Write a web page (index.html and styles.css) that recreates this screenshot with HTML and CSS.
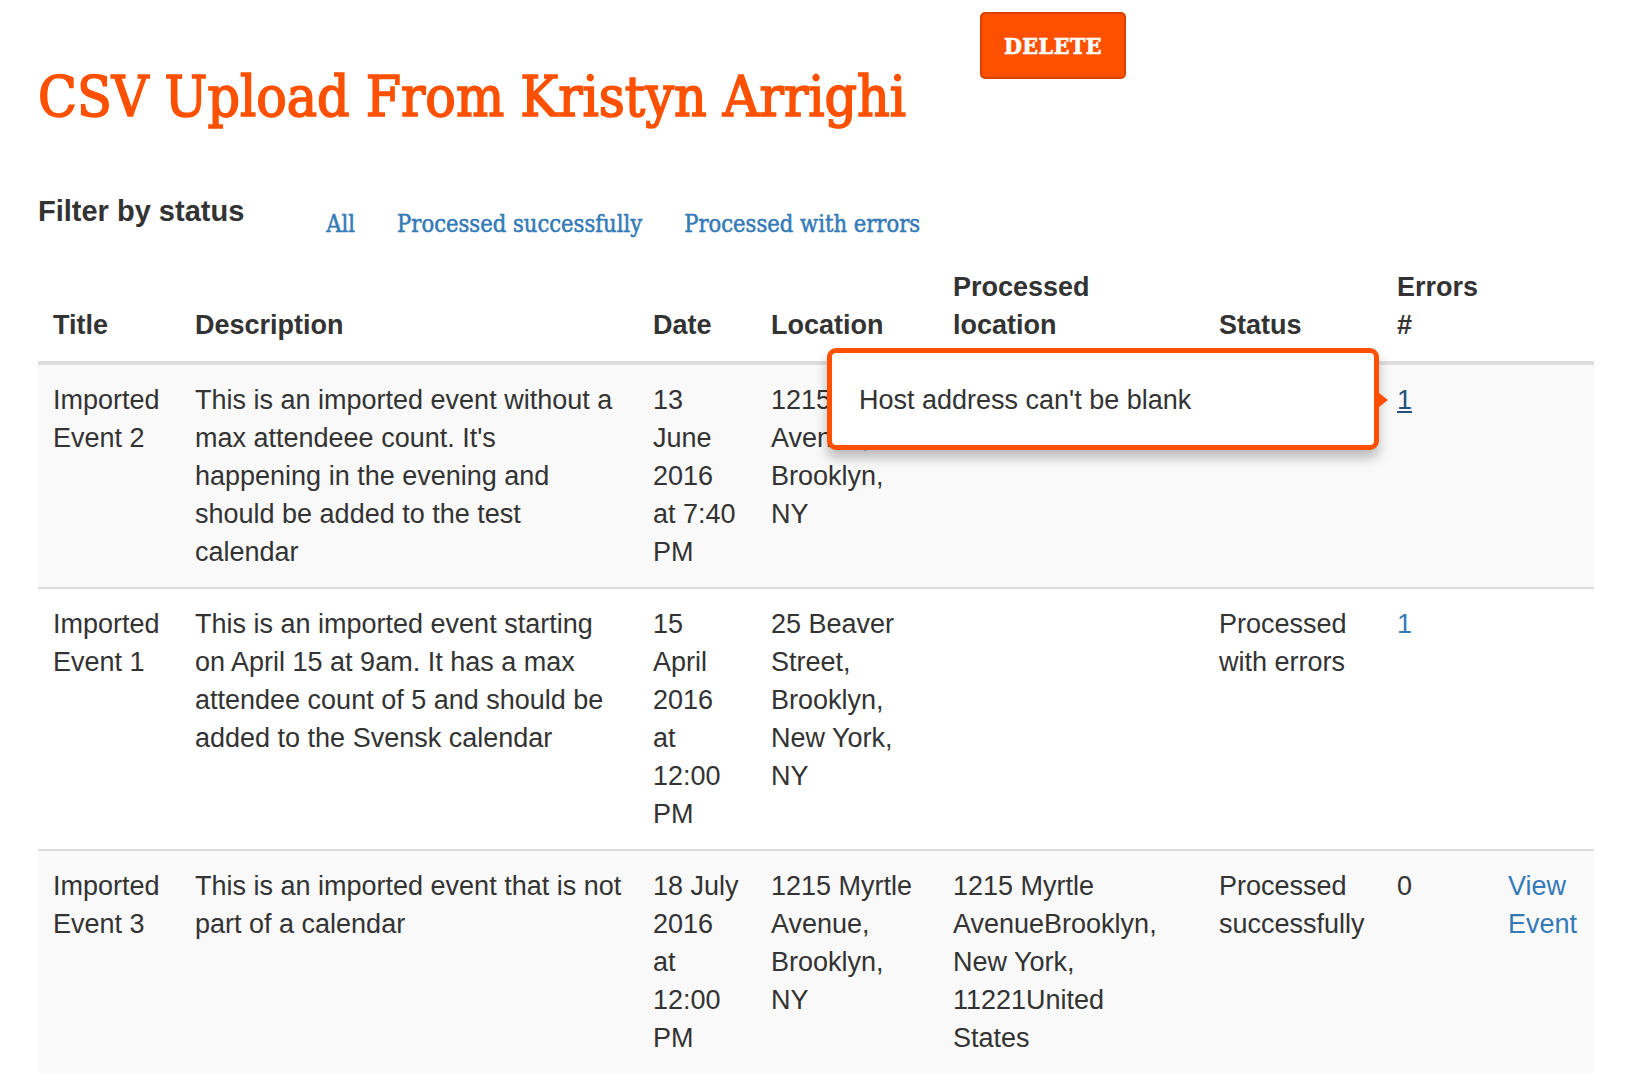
FILE: index.html
```html
<!DOCTYPE html>
<html lang="en">
<head>
  <meta charset="UTF-8" />
  <title>CSV Upload From Kristyn Arrighi</title>
  <link rel="stylesheet" href="styles.css">
</head>
<body>
  <div class="page">
    <header class="upload-header">
      <h1>CSV Upload From Kristyn Arrighi</h1>
      <button class="btn-delete" type="button">DELETE</button>
    </header>

    <div class="filter">
      <h4>Filter by status</h4>
      <ul class="filter-links">
        <li><a href="#">All</a></li>
        <li><a href="#">Processed successfully</a></li>
        <li><a href="#">Processed with errors</a></li>
      </ul>
    </div>

    <div class="table-wrap">
      <table class="events">
        <colgroup>
          <col class="c-title">
          <col class="c-desc">
          <col class="c-date">
          <col class="c-loc">
          <col class="c-ploc">
          <col class="c-status">
          <col class="c-errors">
          <col class="c-view">
        </colgroup>
        <thead>
          <tr>
            <th>Title</th>
            <th>Description</th>
            <th>Date</th>
            <th>Location</th>
            <th>Processed location</th>
            <th>Status</th>
            <th>Errors #</th>
            <th></th>
          </tr>
        </thead>
        <tbody>
          <tr>
            <td>Imported Event 2</td>
            <td>This is an imported event without a max attendeee count. It's happening in the evening and should be added to the test calendar</td>
            <td>13 June 2016 at 7:40 PM</td>
            <td>1215 Myrtle Avenue, Brooklyn, NY</td>
            <td class="ploc"></td>
            <td></td>
            <td><a href="#" class="active-link">1</a></td>
            <td></td>
          </tr>
          <tr>
            <td>Imported Event 1</td>
            <td>This is an imported event starting on April 15 at 9am. It has a max attendee count of 5 and should be added to the Svensk calendar</td>
            <td>15 April 2016 at 12:00 PM</td>
            <td>25 Beaver Street, Brooklyn, New York, NY</td>
            <td class="ploc"></td>
            <td>Processed with errors</td>
            <td><a href="#">1</a></td>
            <td></td>
          </tr>
          <tr>
            <td>Imported Event 3</td>
            <td>This is an imported event that is not part of a calendar</td>
            <td>18 July 2016 at 12:00 PM</td>
            <td>1215 Myrtle Avenue, Brooklyn, NY</td>
            <td class="ploc">1215 Myrtle AvenueBrooklyn, New York, 11221United States</td>
            <td>Processed successfully</td>
            <td>0</td>
            <td><a href="#">View Event</a></td>
          </tr>
        </tbody>
      </table>

      <div class="popover">Host address can't be blank</div>
    </div>
  </div>
</body>
</html>
```

FILE: styles.css
```css
* { box-sizing: border-box; }
body {
  margin: 0;
  font-family: "Liberation Sans", Arial, sans-serif;
  font-size: 27px;
  line-height: 38px;
  color: #333;
  background: #fff;
}
a { color: #337ab7; text-decoration: none; }

.page { padding: 12px 34px 0 38px; }

/* slab headings */
.upload-header h1,
.btn-delete,
.filter-links a {
  font-family: "DejaVu Serif Condensed", "DejaVu Serif", serif;
  font-stretch: condensed;
}

/* HEADER */
.upload-header {
  display: flex;
  align-items: flex-start;
}
.upload-header h1 {
  margin: 47px 0 0;
  font-weight: normal;
  font-size: 56.5px;
  line-height: 76px;
  color: #ff5000;
  -webkit-text-stroke: 1.6px #ff5000;
  white-space: nowrap;
}
.btn-delete {
  margin-left: 74px;
  width: 146px;
  height: 67px;
  border: 2px solid #d94300;
  border-radius: 5px;
  background: #ff5000;
  color: #fff;
  font-weight: bold;
  font-size: 23px;
  letter-spacing: 0.5px;
  -webkit-text-stroke: 0.6px #fff;
}

/* FILTER */
.filter {
  display: flex;
  align-items: flex-start;
  margin-top: 58px;
}
.filter h4 {
  margin: 0;
  font-size: 29px;
  line-height: 36px;
  font-weight: bold;
}
.filter-links {
  display: flex;
  gap: 42px;
  list-style: none;
  margin: 11px 0 0 82px;
  padding: 0;
}
.filter-links a {
  font-size: 23.5px;
  -webkit-text-stroke: 0.5px #337ab7;
}

/* TABLE */
.table-wrap {
  position: relative;
  margin-top: 9px;
}
.events {
  width: 1556px;
  border-collapse: collapse;
  table-layout: fixed;
}
.c-title { width: 142px; }
.c-desc { width: 458px; }
.c-date { width: 118px; }
.c-loc { width: 182px; }
.c-ploc { width: 266px; }
.c-status { width: 178px; }
.c-errors { width: 111px; }
.c-view { width: 101px; }

.events th,
.events td {
  padding: 16px 15px;
  text-align: left;
  vertical-align: top;
}
.events td.ploc { padding-right: 26px; }
.events th {
  vertical-align: bottom;
  font-weight: bold;
  border-bottom: 4px solid #ddd;
  padding-bottom: 17px;
}
.events tbody tr:nth-child(odd) { background: #f9f9f9; }
.events tbody tr + tr td { border-top: 2px solid #ddd; }
.events a.active-link {
  color: #23527c;
  text-decoration: underline;
}

/* ERROR POPOVER */
.popover {
  position: absolute;
  left: 789px;
  top: 96px;
  width: 552px;
  height: 102px;
  padding: 28px 27px;
  background: #fff;
  border: 5px solid #ff5000;
  border-radius: 9px;
  box-shadow: 0 8px 12px rgba(0, 0, 0, 0.25);
}
.popover::after {
  content: '';
  position: absolute;
  right: -14px;
  top: 40px;
  border-top: 7px solid transparent;
  border-bottom: 7px solid transparent;
  border-left: 9px solid #ff5000;
}
```
